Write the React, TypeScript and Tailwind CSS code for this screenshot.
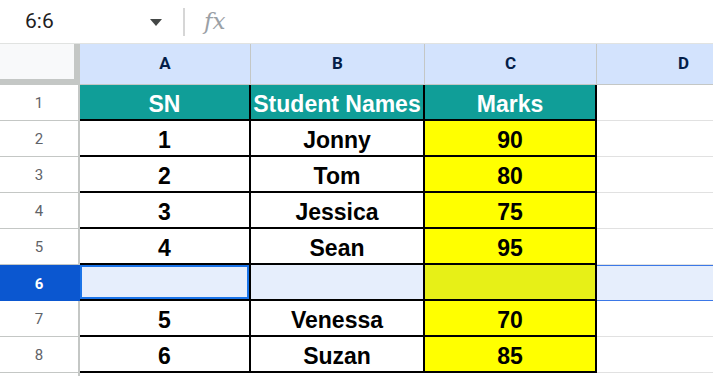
import React from 'react'

type Row = { n: number; a: string; b: string; c: string; head?: boolean; sel?: boolean }

const ROWS: Row[] = [
  { n: 1, a: 'SN', b: 'Student Names', c: 'Marks', head: true },
  { n: 2, a: '1', b: 'Jonny', c: '90' },
  { n: 3, a: '2', b: 'Tom', c: '80' },
  { n: 4, a: '3', b: 'Jessica', c: '75' },
  { n: 5, a: '4', b: 'Sean', c: '95' },
  { n: 6, a: '', b: '', c: '', sel: true },
  { n: 7, a: '5', b: 'Venessa', c: '70' },
  { n: 8, a: '6', b: 'Suzan', c: '85' },
  { n: 9, a: '', b: '', c: '' },
]

const COLS = [
  { k: 'A', w: 'w-[171px]' },
  { k: 'B', w: 'w-[174px]' },
  { k: 'C', w: 'w-[172px]' },
  { k: 'D', w: 'w-[174px]' },
]

function FormulaBar() {
  return (
    <div className="flex h-[44px] shrink-0 items-center border-b border-[#e1e3e1] bg-white font-['Roboto',sans-serif]">
      <span className="ml-[25px] w-[125px] text-[21px] text-[#1f1f1f]">6:6</span>
      <svg width="12" height="7" viewBox="0 0 12 7" className="mt-[2px]">
        <path d="M0 0h12L6 7z" fill="#444746" />
      </svg>
      <div className="ml-[21px] h-[28px] w-[2px] bg-[#d6d6d6]" />
      <span className="ml-[19px] font-['DejaVu_Serif',serif] text-[23px] italic text-[#9aa0a6]">fx</span>
    </div>
  )
}

function ColHeaders() {
  return (
    <div className="flex h-[41px] shrink-0">
      <div className="w-[80px] shrink-0 border-r-[6px] border-b-[6px] border-[#c4c7c5] bg-[#f8f9fa]" />
      {COLS.map((c) => (
        <div
          key={c.k}
          className={`${c.w} flex shrink-0 items-center justify-center border-r border-b border-[#c4c7c5] bg-[#d3e3fd] font-['Roboto',sans-serif] text-[17px] font-bold text-[#041e49]`}
        >
          {c.k}
        </div>
      ))}
    </div>
  )
}

function DataRow({ r }: { r: Row }) {
  const empty = r.n === 9
  const base = `flex shrink-0 items-center justify-center pt-[5px] font-['Liberation_Sans',Arial,sans-serif] text-[23px] font-bold`
  const edge = empty ? '' : 'border-r-2 border-b-2 border-black'
  const cell = r.head ? 'bg-[#109e98] text-white' : r.sel ? 'bg-[#e6eefc] text-black' : 'bg-white text-black'
  const yellow = r.head ? 'bg-[#109e98] text-white' : r.sel ? 'bg-[#e7f017] text-black' : empty ? 'bg-white' : 'bg-[#ffff00] text-black'

  return (
    <div className="flex h-[36px] shrink-0">
      <div
        className={`flex w-[80px] shrink-0 items-center justify-center border-r-2 pt-[2px] font-['Roboto',sans-serif] text-[15px] ${
          r.sel
            ? 'border-[#0b57d0] bg-[#0b57d0] font-bold text-white'
            : 'border-b border-[#c4c7c5] bg-white text-[#5f6368]'
        }`}
      >
        {empty ? '' : r.n}
      </div>
      {r.sel ? (
        <div className={`${base} w-[171px] border-r-2 border-b-2 border-black bg-white !pt-0`}>
          <div className="h-full w-full border-2 border-[#1a73e8] bg-[#e6eefc]" />
        </div>
      ) : (
        <div className={`${base} w-[171px] ${edge} ${cell}`}>{r.a}</div>
      )}
      <div className={`${base} w-[174px] ${edge} ${cell}`}>{r.b}</div>
      <div className={`${base} w-[172px] ${edge} ${yellow}`}>{r.c}</div>
      <div
        className={`w-[174px] shrink-0 ${
          r.sel ? 'border-y border-[#3b78e7] bg-[#e6eefc]' : 'border-b border-[#e1e1e1] bg-white'
        }`}
      />
    </div>
  )
}

export default function App() {
  return (
    <div className="flex h-[376px] w-[713px] flex-col overflow-hidden bg-white">
      <FormulaBar />
      <ColHeaders />
      {ROWS.map((r) => (
        <DataRow key={r.n} r={r} />
      ))}
    </div>
  )
}
